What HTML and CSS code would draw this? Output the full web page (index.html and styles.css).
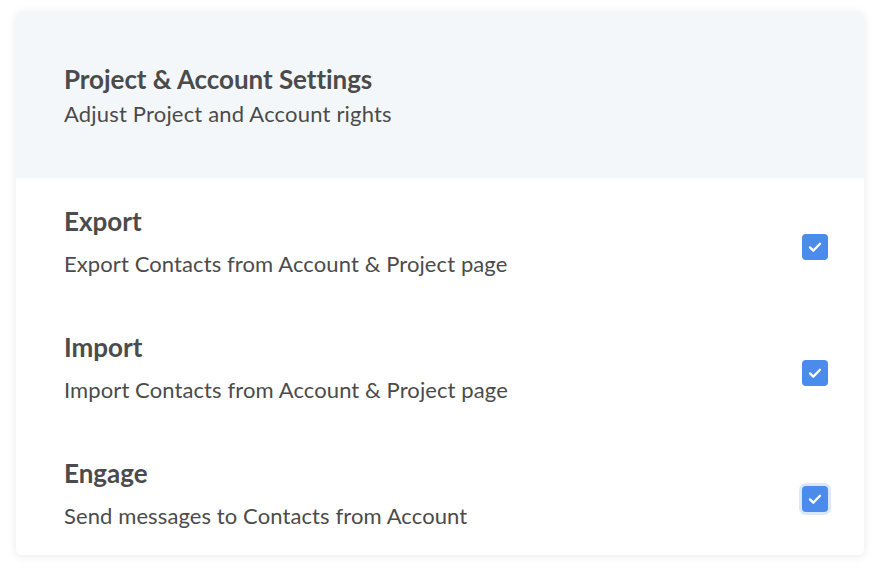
FILE: index.html
```html
<!DOCTYPE html>
<html lang="en">
<head>
<meta charset="utf-8">
<link rel="stylesheet" href="styles.css">
</head>
<body>
<div class="card">
  <div class="card-header">
    <h1 class="header-title">Project &amp; Account Settings</h1>
    <p class="header-sub">Adjust Project and Account rights</p>
  </div>
  <div class="row">
    <div class="row-text">
      <h2 class="row-title">Export</h2>
      <p class="row-desc">Export Contacts from Account &amp; Project page</p>
    </div>
    <span class="check">
      <svg viewBox="0 0 24 24" width="24" height="24"><path d="M7 12.4l3.3 3.2 6.7-6.8" fill="none" stroke="#fff" stroke-width="2.3" stroke-linecap="round" stroke-linejoin="round"/></svg>
    </span>
  </div>
  <div class="row">
    <div class="row-text">
      <h2 class="row-title">Import</h2>
      <p class="row-desc">Import Contacts from Account &amp; Project page</p>
    </div>
    <span class="check">
      <svg viewBox="0 0 24 24" width="24" height="24"><path d="M7 12.4l3.3 3.2 6.7-6.8" fill="none" stroke="#fff" stroke-width="2.3" stroke-linecap="round" stroke-linejoin="round"/></svg>
    </span>
  </div>
  <div class="row">
    <div class="row-text">
      <h2 class="row-title">Engage</h2>
      <p class="row-desc">Send messages to Contacts from Account</p>
    </div>
    <span class="check focus">
      <svg viewBox="0 0 24 24" width="24" height="24"><path d="M7 12.4l3.3 3.2 6.7-6.8" fill="none" stroke="#fff" stroke-width="2.3" stroke-linecap="round" stroke-linejoin="round"/></svg>
    </span>
  </div>
</div>
</body>
</html>
```
FILE: styles.css
```css
* { box-sizing: border-box; }
html, body { margin: 0; padding: 0; background: #fff; }
body {
  font-family: Lato, "Open Sans", sans-serif;
  color: #4b4b4b;
  padding: 12px 18px 25px 16px;
}
.card {
  width: 848px;
  border-radius: 6px;
  background: #fff;
  box-shadow: 0 1px 10px rgba(0, 0, 0, 0.09);
  overflow: hidden;
}
.card-header {
  background: #f4f7fa;
  padding: 51px 48px 0;
  height: 166px;
}
.header-title {
  margin: 0;
  font-size: 26px;
  line-height: 32px;
  font-weight: 700;
  letter-spacing: -0.05px;
}
.header-sub {
  margin: 5px 0 0;
  font-size: 22px;
  line-height: 28px;
  letter-spacing: 0.18px;
}
.row {
  display: flex;
  align-items: flex-start;
  justify-content: space-between;
  padding: 27px 36px 0 48px;
  height: 126px;
}
.row:last-child { height: 125px; }
.row-title {
  margin: 0;
  font-size: 26px;
  line-height: 32px;
  font-weight: 700;
}
.row-desc {
  margin: 13px 0 0;
  font-size: 22px;
  line-height: 28px;
  letter-spacing: 0.1px;
}
.check {
  margin-top: 29px;
  width: 26px;
  height: 26px;
  border-radius: 4px;
  background: #4a8bec;
  display: flex;
  align-items: center;
  justify-content: center;
}
.check.focus {
  box-shadow: 0 0 0 3px #dbe7fb;
}
```
